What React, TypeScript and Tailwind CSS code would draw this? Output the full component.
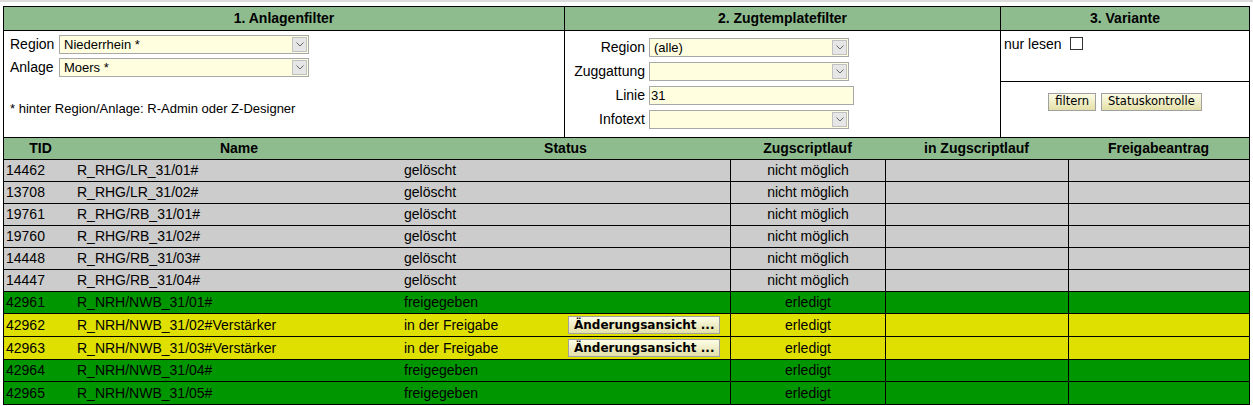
import type { ReactNode } from "react";

type Row = {
  tid: string;
  name: string;
  status: string;
  zug: string;
  kind: "gray" | "green" | "yellow";
};

const rows: Row[] = [
  { tid: "14462", name: "R_RHG/LR_31/01#", status: "gelöscht", zug: "nicht möglich", kind: "gray" },
  { tid: "13708", name: "R_RHG/LR_31/02#", status: "gelöscht", zug: "nicht möglich", kind: "gray" },
  { tid: "19761", name: "R_RHG/RB_31/01#", status: "gelöscht", zug: "nicht möglich", kind: "gray" },
  { tid: "19760", name: "R_RHG/RB_31/02#", status: "gelöscht", zug: "nicht möglich", kind: "gray" },
  { tid: "14448", name: "R_RHG/RB_31/03#", status: "gelöscht", zug: "nicht möglich", kind: "gray" },
  { tid: "14447", name: "R_RHG/RB_31/04#", status: "gelöscht", zug: "nicht möglich", kind: "gray" },
  { tid: "42961", name: "R_NRH/NWB_31/01#", status: "freigegeben", zug: "erledigt", kind: "green" },
  { tid: "42962", name: "R_NRH/NWB_31/02#Verstärker", status: "in der Freigabe", zug: "erledigt", kind: "yellow" },
  { tid: "42963", name: "R_NRH/NWB_31/03#Verstärker", status: "in der Freigabe", zug: "erledigt", kind: "yellow" },
  { tid: "42964", name: "R_NRH/NWB_31/04#", status: "freigegeben", zug: "erledigt", kind: "green" },
  { tid: "42965", name: "R_NRH/NWB_31/05#", status: "freigegeben", zug: "erledigt", kind: "green" },
];

const rowBg = {
  gray: "bg-[#cccccc] h-[22px]",
  green: "bg-[#009600] h-[22px]",
  yellow: "bg-[#e0e000] h-[23px]",
};

function Chevron() {
  return (
    <svg width="8" height="5" viewBox="0 0 8 5">
      <path d="M0.5 0.5 L4 4 L7.5 0.5" fill="none" stroke="#666" strokeWidth="1" />
    </svg>
  );
}

function FakeSelect({ value, width }: { value?: string; width: string }) {
  return (
    <div className={`flex h-[19px] items-center border border-[#a8a8a8] bg-[#ffffe0] ${width}`}>
      <span className="flex-1 pl-[4px] text-[13px] leading-none text-black">{value}</span>
      <span className="m-px flex h-[15px] w-[15px] items-center justify-center border border-[#c0c0c0] bg-[#e6e6e6]">
        <Chevron />
      </span>
    </div>
  );
}

function BeigeButton({ children, bold }: { children: ReactNode; bold?: boolean }) {
  return (
    <button
      type="button"
      className={`h-[18px] border border-[#a0a0a0] bg-linear-to-b from-[#fcfce6] to-[#e4e0a8] font-['DejaVu_Sans',Verdana,sans-serif] leading-none text-black ${
        bold ? "px-[5px] text-[12px] font-bold" : "px-[6px] text-[11.5px]"
      }`}
    >
      {children}
    </button>
  );
}

const zugFields = [
  { label: "Region", value: "(alle)", input: false },
  { label: "Zuggattung", value: "", input: false },
  { label: "Linie", value: "31", input: true },
  { label: "Infotext", value: "", input: false },
];

export default function App() {
  return (
    <div className="min-h-[406px] bg-white font-['Liberation_Sans',Arial,sans-serif] text-[14px] text-black">
      <div className="h-[2px] bg-[#dcdcdc]" />
      <div className="ml-[3px] mt-[4px] w-[1247px] border border-black">
        {/* filter header */}
        <div className="flex h-[24px] border-b border-black bg-[#8fbc8f] font-bold">
          <div className="flex w-[560px] items-center justify-center">1. Anlagenfilter</div>
          <div className="flex w-[436px] items-center justify-center border-l border-black">2. Zugtemplatefilter</div>
          <div className="flex flex-1 items-center justify-center border-l border-black">3. Variante</div>
        </div>

        {/* filter body */}
        <div className="flex h-[107px] border-b border-black">
          <div className="w-[560px] pl-[6px] pt-[4px]">
            <div className="flex h-[19px] items-center">
              <span className="w-[49px]">Region</span>
              <FakeSelect value="Niederrhein *" width="w-[250px]" />
            </div>
            <div className="mt-[4px] flex h-[19px] items-center">
              <span className="w-[49px]">Anlage</span>
              <FakeSelect value="Moers *" width="w-[250px]" />
            </div>
            <p className="mt-[24px] text-[13px] leading-[15px]">* hinter Region/Anlage: R-Admin oder Z-Designer</p>
          </div>

          <div className="flex w-[436px] flex-col gap-[5px] border-l border-black pt-[7px]">
            {zugFields.map((f) => (
              <div key={f.label} className="flex h-[19px] items-center">
                <span className="w-[83px] pr-[3px] text-right">{f.label}</span>
                {f.input ? (
                  <div className="ml-[1px] flex h-[19px] w-[205px] items-center border border-[#a8a8a8] bg-[#ffffe0] pl-[1px] text-[13px]">
                    {f.value}
                  </div>
                ) : (
                  <div className="ml-[1px]">
                    <FakeSelect value={f.value} width="w-[200px]" />
                  </div>
                )}
              </div>
            ))}
          </div>

          <div className="flex flex-1 flex-col border-l border-black">
            <div className="flex h-[51px] items-start gap-[8px] border-b border-black pl-[3px] pt-[3px]">
              <span>nur lesen</span>
              <span className="mt-[3px] h-[13px] w-[13px] border border-[#333] bg-white" />
            </div>
            <div className="flex flex-1 justify-center gap-[5px] pt-[11px]">
              <BeigeButton>filtern</BeigeButton>
              <BeigeButton>Statuskontrolle</BeigeButton>
            </div>
          </div>
        </div>

        {/* table header */}
        <div className="flex h-[22px] border-b border-black bg-[#8fbc8f] font-bold">
          <div className="flex w-[73px] items-center justify-center">TID</div>
          <div className="flex w-[324px] items-center justify-center">Name</div>
          <div className="flex w-[329px] items-center justify-center">Status</div>
          <div className="flex w-[155px] items-center justify-center">Zugscriptlauf</div>
          <div className="flex w-[183px] items-center justify-center">in Zugscriptlauf</div>
          <div className="flex flex-1 items-center justify-center">Freigabeantrag</div>
        </div>

        {rows.map((r, i) => (
          <div
            key={r.tid}
            className={`flex ${rowBg[r.kind]} ${i < rows.length - 1 ? "border-b border-black" : ""}`}
          >
            <div className="flex w-[73px] items-center pl-[2px]">{r.tid}</div>
            <div className="flex w-[324px] items-center">{r.name}</div>
            <div className="flex w-[166px] items-center pl-[3px]">{r.status}</div>
            <div className="flex w-[163px] items-center pl-[1px]">
              {r.kind === "yellow" && <BeigeButton bold>Änderungsansicht ...</BeigeButton>}
            </div>
            <div className="flex w-[155px] items-center justify-center border-l border-black">{r.zug}</div>
            <div className="w-[183px] border-l border-black" />
            <div className="flex-1 border-l border-black" />
          </div>
        ))}
      </div>
    </div>
  );
}
